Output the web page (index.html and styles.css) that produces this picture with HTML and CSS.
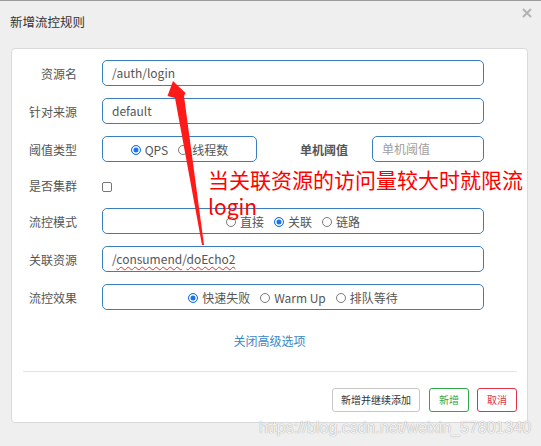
FILE: index.html
```html
<!DOCTYPE html>
<html lang="zh-CN">
<head>
<meta charset="utf-8">
<title>新增流控规则</title>
<link rel="stylesheet" href="styles.css">
</head>
<body>
<div class="dialog">
  <div class="header">
    <span class="title">新增流控规则</span>
    <button class="close" type="button" aria-label="close">
      <svg width="10" height="10" viewBox="0 0 10 10"><path d="M1 1L9 9M9 1L1 9" stroke="#b3b3b3" stroke-width="2" fill="none"/></svg>
    </button>
  </div>
  <div class="panel">
    <div class="form">
      <div class="row">
        <span class="label">资源名</span>
        <div class="field">/auth/login</div>
      </div>
      <div class="row">
        <span class="label">针对来源</span>
        <div class="field">default</div>
      </div>
      <div class="row">
        <span class="label">阈值类型</span>
        <div class="field radios narrow">
          <span class="opt"><span class="radio on"></span>QPS</span>
          <span class="opt"><span class="radio"></span>线程数</span>
        </div>
        <span class="label-inline">单机阈值</span>
        <div class="field placeholder">单机阈值</div>
      </div>
      <div class="row short">
        <span class="label">是否集群</span>
        <span class="checkbox"></span>
      </div>
      <div class="row">
        <span class="label">流控模式</span>
        <div class="field radios">
          <span class="opt"><span class="radio"></span>直接</span>
          <span class="opt"><span class="radio on"></span>关联</span>
          <span class="opt"><span class="radio"></span>链路</span>
        </div>
      </div>
      <div class="row">
        <span class="label">关联资源</span>
        <div class="field">/<span class="typo">consumend</span>/<span class="typo">doEcho2</span></div>
      </div>
      <div class="row">
        <span class="label">流控效果</span>
        <div class="field radios">
          <span class="opt"><span class="radio on"></span>快速失败</span>
          <span class="opt"><span class="radio"></span>Warm Up</span>
          <span class="opt"><span class="radio"></span>排队等待</span>
        </div>
      </div>
    </div>
    <div class="toggle"><a class="link">关闭高级选项</a></div>
    <div class="divider"></div>
    <div class="footer">
      <button class="btn btn-wide" type="button">新增并继续添加</button>
      <button class="btn btn-green" type="button">新增</button>
      <button class="btn btn-red" type="button">取消</button>
    </div>
  </div>
  <div class="annotation">当关联资源的访问量较大时就限流<br>login</div>
  <svg class="arrow" width="541" height="446" viewBox="0 0 541 446">
    <polygon points="173,80 185.5,92 184,95 204,244 202,244 175,97 167.5,95" fill="#ff1a1a"/>
  </svg>
  <div class="watermark">https://blog.csdn.net/weixin_57801340</div>
</div>
</body>
</html>
```

FILE: styles.css
```css
* { box-sizing: border-box; }

html, body {
  margin: 0;
  padding: 0;
}

body {
  font-family: "Noto Sans CJK SC", "Liberation Sans", sans-serif;
  font-size: 12px;
  color: #555;
}

.dialog {
  position: relative;
  width: 541px;
  height: 446px;
  overflow: hidden;
  background: #efefef;
  border-top: 1px solid #9a9a9a;
}

.header {
  height: 47px;
  display: flex;
  justify-content: space-between;
  align-items: flex-start;
  padding: 0 9px 0 10px;
}

.title {
  padding-top: 11px;
  line-height: 20px;
  font-size: 12.5px;
  color: #333;
}

.close {
  margin-top: 7px;
  width: 10px;
  height: 10px;
  padding: 0;
  border: 0;
  background: none;
  display: block;
}

.close svg { display: block; }

.panel {
  margin-left: 11px;
  width: 517px;
  background: #fff;
  border: 1px solid #dadada;
  border-radius: 4px;
  padding: 11px 0 10px;
}

.form {
  display: flex;
  flex-direction: column;
  gap: 12px;
  padding-right: 43px;
}

.row {
  display: flex;
  align-items: center;
  height: 26px;
}

.row.short { height: 22px; }

.label {
  width: 65px;
  flex: none;
  margin-right: 25px;
  text-align: right;
  color: #555;
}

.label-inline {
  flex: none;
  width: 48px;
  margin: 0 24px 0 43px;
  font-weight: bold;
  color: #555;
}

.field {
  flex: 1;
  height: 26px;
  line-height: 24px;
  border: 1px solid #3a7ebf;
  border-radius: 5px;
  padding: 0 9px;
  color: #555;
  white-space: nowrap;
}

.field.narrow {
  flex: none;
  width: 155px;
}

.field.placeholder { color: #a0a0a0; }

.radios {
  display: flex;
  justify-content: center;
  align-items: center;
  gap: 10px;
  padding: 1px 0 0;
}

.opt {
  display: flex;
  align-items: center;
  gap: 4px;
}

.radio {
  width: 10px;
  height: 10px;
  border-radius: 50%;
  border: 1px solid #7a7a7a;
  background: #fff;
  flex: none;
}

.radio.on {
  border-color: #1a73e8;
  background: #1a73e8;
  box-shadow: inset 0 0 0 1.5px #fff;
}

.checkbox {
  width: 10px;
  height: 10px;
  border: 1px solid #767676;
  border-radius: 2px;
  margin-top: 3px;
}

.typo {
  text-decoration: underline wavy #e03030;
  text-decoration-thickness: 1px;
  text-underline-offset: 2px;
}

.toggle {
  margin-top: 22px;
  text-align: center;
  line-height: 18px;
}

.link {
  color: #3a87c8;
  text-decoration: none;
}

.divider {
  margin: 21px 10px 0 11px;
  height: 1px;
  background: #e4e4e4;
}

.footer {
  display: flex;
  justify-content: flex-end;
  gap: 8px;
  padding: 16px 10px 0 0;
}

.btn {
  height: 24px;
  padding: 0 9px;
  font-family: "Noto Sans CJK SC", "Liberation Sans", sans-serif;
  font-size: 10px;
  line-height: 22px;
  background: #fff;
  border: 1px solid #c8c8c8;
  border-radius: 3px;
  color: #333;
}

.btn-wide { padding: 0 8px; margin-right: 1px; }

.btn-green {
  border-color: #2fa84a;
  color: #2fa84a;
}

.btn-red {
  border-color: #e0334a;
  color: #e0334a;
}

.annotation {
  position: absolute;
  left: 208px;
  top: 165px;
  font-size: 21px;
  line-height: 27px;
  color: #ff0000;
  white-space: nowrap;
}

.arrow {
  position: absolute;
  left: 0;
  top: 0;
  pointer-events: none;
}

.watermark {
  position: absolute;
  left: 259px;
  top: 419px;
  font-family: "Liberation Sans", sans-serif;
  font-size: 16px;
  line-height: 16px;
  color: rgba(255, 255, 255, 0.9);
  text-shadow: 0 0 1px rgba(0, 0, 0, 0.45);
  white-space: nowrap;
  pointer-events: none;
}
```
